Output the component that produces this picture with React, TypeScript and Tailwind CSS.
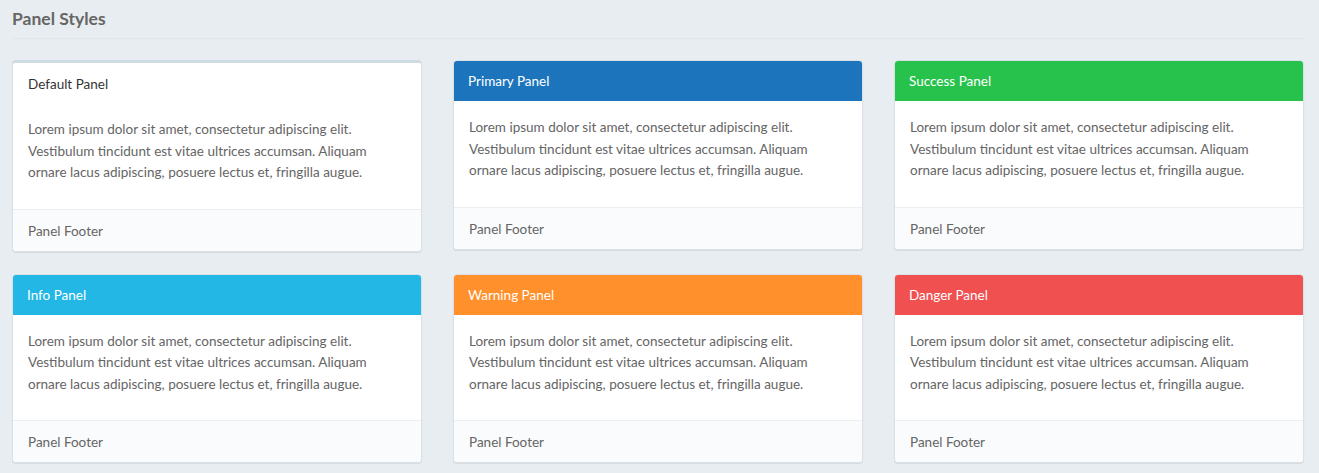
const lorem =
  "Lorem ipsum dolor sit amet, consectetur adipiscing elit. Vestibulum tincidunt est vitae ultrices accumsan. Aliquam ornare lacus adipiscing, posuere lectus et, fringilla augue.";

type PanelProps = {
  title: string;
  head?: string;
};

function Panel({ title, head }: PanelProps) {
  return (
    <div
      className={
        head
          ? "rounded-[4px] border border-[#d9e1e6] bg-white shadow-[0_1px_1px_rgba(0,0,0,0.08)] overflow-hidden"
          : "rounded-[4px] border border-[#d9e1e6] border-t-[3px] border-t-[#cfdbe2] bg-white shadow-[0_1px_1px_rgba(0,0,0,0.08)] overflow-hidden"
      }
    >
      <div
        className={
          head
            ? "px-[15px] pt-[11px] pb-[9px] leading-[21px] text-white -mt-px -mx-px"
            : "px-[15px] pt-[11px] pb-[8px] leading-[21px] text-[#333]"
        }
        style={head ? { backgroundColor: head } : undefined}
      >
        {title}
      </div>
      <div className="px-[15px] pt-[16px] pb-[15px] text-[#656565]">
        <p className="mb-[10px] w-[352px]">{lorem}</p>
      </div>
      <div className="border-t border-[#eceff1] bg-[#fafbfc] px-[15px] pt-[11px] pb-[9px] leading-[21px] text-[#656565]">
        Panel Footer
      </div>
    </div>
  );
}

export default function App() {
  const panels: PanelProps[] = [
    { title: "Default Panel" },
    { title: "Primary Panel", head: "#1c75bc" },
    { title: "Success Panel", head: "#27c24c" },
    { title: "Info Panel", head: "#23b7e5" },
    { title: "Warning Panel", head: "#ff902b" },
    { title: "Danger Panel", head: "#f05050" },
  ];

  return (
    <div className="min-h-screen bg-[#e8edf1] pl-[12px] pr-[15px] font-['Lato',sans-serif] text-[13.5px] leading-[21.5px]">
      <div className="pt-[8px] pb-[9px] border-b border-[#dfe6ea] text-[17.5px] leading-[21px] font-bold text-[#666]">
        Panel Styles
      </div>
      <div className="mt-[21px] grid grid-cols-3 items-start gap-x-[31px] gap-y-[22px]">
        {panels.map((p) => (
          <Panel key={p.title} {...p} />
        ))}
      </div>
    </div>
  );
}
